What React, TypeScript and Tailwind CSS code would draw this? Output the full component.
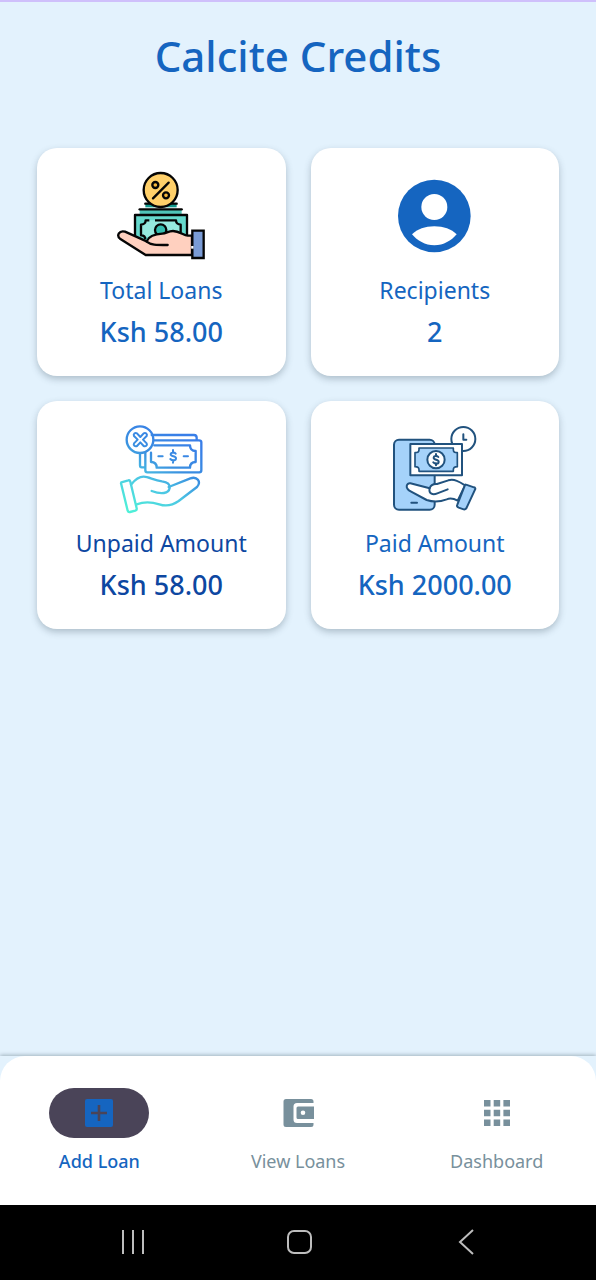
import type { ReactNode } from "react";

function TotalLoansIcon() {
  return (
    <svg viewBox="4 0 360 330" className="h-[110px] w-[120px]" fill="none" stroke="#050505" strokeWidth="7" strokeLinecap="round" strokeLinejoin="round" aria-hidden="true">
      <path d="M137 131h94v11h-94z" fill="#12998e" stroke="none" />
      <path d="M137 131h94" />
      <path d="M120 148h126v14H120z" fill="#4fc4b8" stroke="none" />
      <path d="M120 148h126" />
      <path d="M106 165h156v80H106z" fill="#66d9cd" />
      <path d="M122 193c9 0 15-5 15-12h92c0 7 6 12 16 12v38H122z" fill="#96eadf" stroke="none" />
      <path d="M149 181h-11c0 8-6 13-14 13v32c8 0 13 5 13 12M166 181h63c0 8 6 13 14 13v24" strokeLinecap="butt" />
      <circle cx="183" cy="210" r="17" fill="#35beb0" />
      <circle cx="183" cy="90" r="51" fill="#ffd06a" />
      <path d="M160 115l47-47" />
      <circle cx="167" cy="75" r="9" fill="#f4b63c" />
      <circle cx="199" cy="106" r="9" fill="#f4b63c" />
      <path d="M277 227h-13c-12 0-24-14-44-14-15 0-20 8-32 8-20 1-39 4-47 23l-65-29c-18-5-26 12-15 21l77 49h139z" fill="#ffd0bf" />
      <path d="M141 245c12 10 27 10 63 10" />
      <path d="M278 212h34v82h-34z" fill="#7a9bd5" strokeLinejoin="miter" />
      <path d="M278 258v8" stroke="#fff" strokeLinecap="butt" />
    </svg>
  );
}

function RecipientsIcon() {
  return (
    <svg viewBox="-16 0 360 330" className="h-[110px] w-[120px]" aria-hidden="true">
      <circle cx="162" cy="168" r="109" fill="#1565c0" />
      <circle cx="162" cy="141" r="39" fill="#fff" />
      <path d="M95 223c16-16 39-24 67-24s51 8 67 24c-16 19-39 33-67 33s-51-14-67-33z" fill="#fff" />
    </svg>
  );
}

function UnpaidIcon() {
  return (
    <svg viewBox="2 -6 360 330" className="h-[110px] w-[120px]" fill="none" stroke="url(#unpaid)" strokeWidth="7" strokeLinecap="round" strokeLinejoin="round" aria-hidden="true">
      <defs>
        <linearGradient id="unpaid" gradientUnits="userSpaceOnUse" x1="90" y1="290" x2="225" y2="50">
          <stop offset="0" stopColor="#4ff0d8" />
          <stop offset=".38" stopColor="#4cc6e4" />
          <stop offset=".65" stopColor="#3a8fe0" />
          <stop offset="1" stopColor="#397ee8" />
        </linearGradient>
      </defs>
      <circle cx="119" cy="74" r="40" />
      <path d="M112 74l-11-11c-3-6 3-11 9-8l10 11 10-11c6-3 12 2 9 8l-11 11 11 11c3 6-3 11-9 8l-10-11-10 11c-6 3-12-2-9-8z" strokeWidth="6" />
      <path d="M154 60h127c6 0 8 3 8 8v8M161 76h135c5 0 7 2 7 6v84c0 4-2 6-6 6H141c-4 0-6-2-6-6v-52M119 115v36c0 4 2 6 5 6h10" />
      <path d="M162 91h107c0 11 6 17 17 17v33c-11 0-17 6-17 17H169c0-11-6-17-17-17v-28" />
      <path d="M174 124h13M250 124h13M218 105v8M218 135v8M226 116c-4-5-15-4-15 2 0 8 16 4 16 12 0 8-12 8-17 2" strokeWidth="6" />
      <path d="M63 202l21-6c3-1 5 1 6 4l19 80c1 4-1 6-4 7l-16 4c-4 1-6-1-7-4L62 205" />
      <path d="M92 209c11-14 24-24 38-24 15 0 29 10 55 14 17 2 24 10 23 20-3 17-25 20-54 9" />
      <path d="M205 216l65-26c20-7 34 10 20 26l-55 42c-17 12-37 17-58 10-22-7-42-10-68 0" />
    </svg>
  );
}

function PaidIcon() {
  return (
    <svg viewBox="-16 -6 360 330" className="h-[110px] w-[120px]" fill="none" stroke="#21527e" strokeWidth="6" strokeLinecap="round" strokeLinejoin="round" aria-hidden="true">
      <rect x="41" y="74" width="122" height="210" rx="15" fill="#a5d2fa" />
      <path d="M93 263h17" />
      <circle cx="249" cy="72" r="36" fill="#fff" />
      <path d="M249 58v16h9" />
      <path d="M90 87h155v94H90z" fill="#fff" />
      <path d="M116 99h103v5c0 5 4 9 12 9v42c-8 0-12 4-12 9v5H116v-5c0-5-4-9-12-9v-42c8 0 12-4 12-9z" fill="#a5d2fa" strokeWidth="5" />
      <circle cx="167" cy="134" r="26" fill="#fff" />
      <path d="M167 117v6M167 145v6M174 126c-4-5-14-4-14 2 0 8 15 4 15 12 0 8-11 8-16 2" />
      <path d="M90 205l58 15c3-10 9-14 22-13l34-11c18-5 33 4 50 15l-22 46c-13-7-21-9-33-4-21 8-36 10-60 2l-48-26c-19-10-12-26-1-24z" fill="#fff" />
      <path d="M148 220c-4 17 10 21 23 15l31-12" />
      <path d="M257 209l24 8c4 1 5 4 3 7l-25 54c-2 5-5 6-9 5l-15-5c-5-2-6-5-4-9l22-56c1-4 2-5 4-4z" fill="#a5d2fa" />
    </svg>
  );
}

function StatCard({ icon, label, value, tone }: { icon: ReactNode; label: string; value: string; tone: string }) {
  return (
    <article className={`flex flex-col items-center rounded-[20px] bg-white pt-3 pb-6 shadow-[0_3px_7px_rgba(60,80,95,0.32)] ${tone}`}>
      {icon}
      <h2 className="mt-1 text-[23px] leading-8 font-normal">{label}</h2>
      <p className="mt-1.5 text-[27px] leading-10 font-medium">{value}</p>
    </article>
  );
}

function NavItem({ icon, label, active = false }: { icon: ReactNode; label: string; active?: boolean }) {
  return (
    <button
      type="button"
      aria-current={active ? "page" : undefined}
      className={`flex flex-1 flex-col items-center gap-2.5 text-lg leading-[26px] ${active ? "font-medium text-[#1565c0]" : "font-normal text-[#78909c]"}`}
    >
      <span className={`flex h-[50px] w-[100px] items-center justify-center rounded-full ${active ? "bg-[#4a4458]" : ""}`}>{icon}</span>
      {label}
    </button>
  );
}

export default function App() {
  return (
    <div className="flex min-h-screen flex-col border-t-2 border-[#cfc0fb] bg-[#e3f2fd] font-['Noto_Sans',sans-serif]">
      <header className="pt-6 text-center">
        <h1 className="text-[42px] leading-[60px] font-medium text-[#1565c0]">Calcite Credits</h1>
      </header>
      <main className="grow px-[37px] pt-[62px] pb-6">
        <div className="grid grid-cols-2 gap-[25px]">
          <StatCard icon={<TotalLoansIcon />} label="Total Loans" value="Ksh 58.00" tone="text-[#1565c0]" />
          <StatCard icon={<RecipientsIcon />} label="Recipients" value="2" tone="text-[#1565c0]" />
          <StatCard icon={<UnpaidIcon />} label="Unpaid Amount" value="Ksh 58.00" tone="text-[#0d47a1]" />
          <StatCard icon={<PaidIcon />} label="Paid Amount" value="Ksh 2000.00" tone="text-[#1565c0]" />
        </div>
      </main>
      <div className="shadow-[0_-1px_4px_rgba(60,80,95,0.4)]">
        <div className="bg-[#e3f2fd]">
          <nav className="flex rounded-t-[25px] bg-white pt-8 pb-[31px]">
            <NavItem
              active
              label="Add Loan"
              icon={
                <svg viewBox="0 0 28 28" className="size-7" aria-hidden="true">
                  <rect width="28" height="28" rx="2" fill="#1565c0" />
                  <path d="M14 6v16M6 14h16" stroke="#4a4458" strokeWidth="2.6" />
                </svg>
              }
            />
            <NavItem
              label="View Loans"
              icon={
                <svg viewBox="0 0 32 30" className="h-[30px] w-8" aria-hidden="true">
                  <path d="M4 1h25a2.500 2.500 0 0 1 2.500 2.500V5H15a3.500 3.500 0 0 0-3.500 3.500v13A3.500 3.500 0 0 0 15 25h16.500v1.500A2.500 2.500 0 0 1 29 29H4a2.500 2.500 0 0 1-2.500-2.500v-23A2.500 2.500 0 0 1 4 1z" fill="#78909c" />
                  <path fillRule="evenodd" d="M16 8.500h16v12.500H16a1.500 1.500 0 0 1-1.500-1.500V10A1.500 1.500 0 0 1 16 8.500zm5 4a2.300 2.300 0 1 0 0 4.600 2.300 2.300 0 0 0 0-4.600z" fill="#78909c" />
                </svg>
              }
            />
            <NavItem
              label="Dashboard"
              icon={
                <svg viewBox="0 0 26 26" className="size-[26px]" fill="#78909c" aria-hidden="true">
                  <path d="M0 0h6.500v6.500H0zM9.700 0h6.500v6.500H9.700zM19.400 0H26v6.500h-6.600zM0 9.700h6.500v6.500H0zM9.700 9.700h6.500v6.500H9.700zM19.400 9.700H26v6.500h-6.600zM0 19.400h6.500V26H0zM9.700 19.400h6.500V26H9.700zM19.400 19.400H26V26h-6.600z" />
                </svg>
              }
            />
          </nav>
        </div>
      </div>
      <footer className="flex h-[75px] items-center justify-center gap-[139px] bg-black">
        <button type="button" aria-label="Recent apps">
          <svg viewBox="0 0 28 28" className="size-7" fill="none" stroke="#bdbdbd" strokeWidth="2" aria-hidden="true">
            <path d="M6 1v24M16 1v24M26 1v24" />
          </svg>
        </button>
        <button type="button" aria-label="Home">
          <svg viewBox="0 0 28 28" className="size-7" fill="none" stroke="#bdbdbd" strokeWidth="2" aria-hidden="true">
            <rect x="4" y="2" width="23" height="22" rx="6" />
          </svg>
        </button>
        <button type="button" aria-label="Back">
          <svg viewBox="0 0 28 28" className="size-7" fill="none" stroke="#bdbdbd" strokeWidth="2" aria-hidden="true">
            <path d="M22 1L9 13l13 12" />
          </svg>
        </button>
      </footer>
    </div>
  );
}
